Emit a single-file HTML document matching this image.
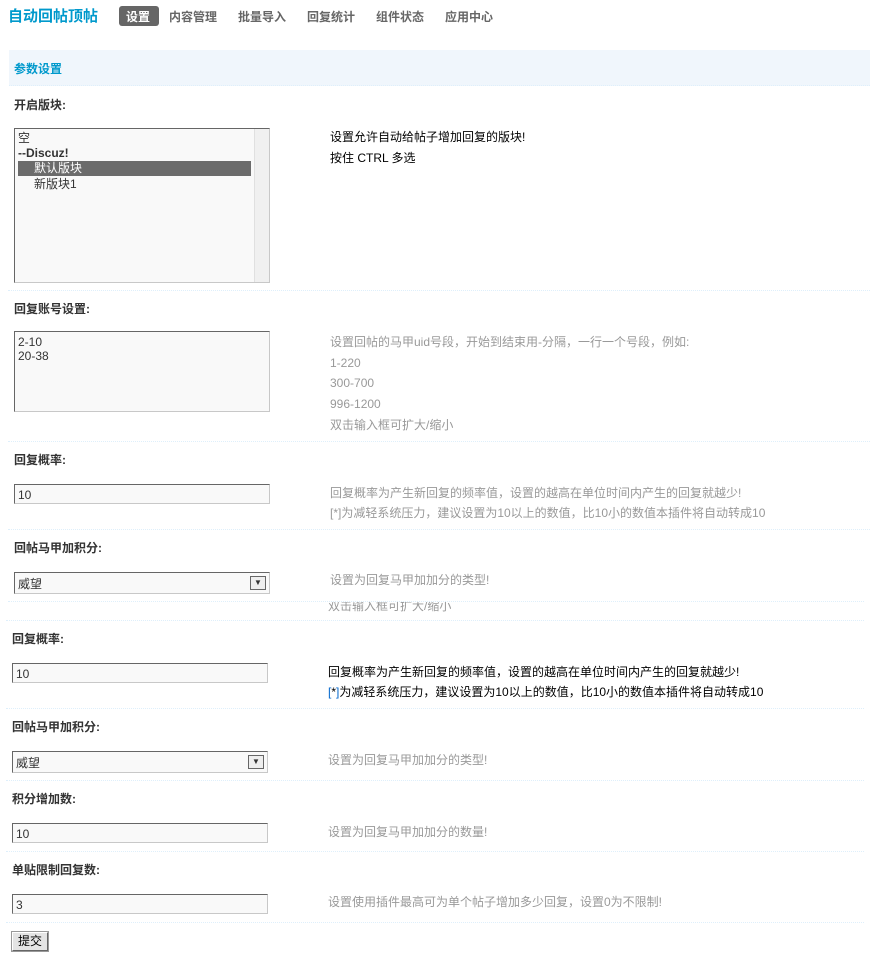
<!DOCTYPE html>
<html><head><meta charset="utf-8">
<style>
*{margin:0;padding:0;box-sizing:border-box}
body{width:870px;height:978px;background:#fff;font:12px "Liberation Sans","Noto Sans CJK SC",sans-serif;color:#333;position:relative;overflow:hidden}
.a{position:absolute;white-space:nowrap;line-height:14px}
.b{font-weight:bold}
.g{color:#999}
.sep{position:absolute;height:0;border-top:1px dotted #deeffb}
.box{position:absolute;background:#f9f9f9;border:1px solid #c8c8c8;border-top-color:#666;border-left-color:#666}
.box span{position:absolute;left:3px;top:3px;line-height:14px}
</style></head><body>
<div class="a b" style="left:8px;top:8px;font-size:15px;line-height:17px;color:#09c">自动回帖顶帖</div>
<div class="a b" style="left:119px;top:6px;width:40px;height:20px;background:#666;border-radius:3px"></div>
<div class="a b" style="left:126px;top:10px;color:#fff">设置</div>
<div class="a b" style="left:169px;top:10px;color:#666">内容管理</div>
<div class="a b" style="left:238px;top:10px;color:#666">批量导入</div>
<div class="a b" style="left:307px;top:10px;color:#666">回复统计</div>
<div class="a b" style="left:376px;top:10px;color:#666">组件状态</div>
<div class="a b" style="left:445px;top:10px;color:#666">应用中心</div>

<div class="a" style="left:9px;top:50px;width:861px;height:36px;background:#f0f6fc;border-bottom:1px dotted #deeffb"></div>
<div class="a b" style="left:14px;top:62px;color:#09c">参数设置</div>

<div class="a b" style="left:14px;top:98px">开启版块:</div>
<div class="box" style="left:14px;top:128px;width:256px;height:155px">
 <div style="position:absolute;right:0;top:0;width:15px;height:153px;background:#f0f0f0;border-left:1px solid #e0e0e0"></div>
 <div class="a" style="left:3px;top:2px">空</div>
 <div class="a b" style="left:3px;top:17px">--Discuz!</div>
 <div class="a" style="left:3px;top:32px;width:233px;height:15px;background:#6b6b6b;color:#fff;padding-left:16px">默认版块</div>
 <div class="a" style="left:19px;top:48px">新版块1</div>
</div>
<div class="a" style="left:330px;top:130px;color:#000">设置允许自动给帖子增加回复的版块!</div>
<div class="a" style="left:330px;top:151px;color:#000">按住 CTRL 多选</div>
<div class="sep" style="left:8px;top:290px;width:862px"></div>

<div class="a b" style="left:14px;top:302px">回复账号设置:</div>
<div class="box" style="left:14px;top:331px;width:256px;height:81px"><span style="left:3px;top:3px">2-10<br>20-38</span></div>
<div class="a g" style="left:330px;top:335px">设置回帖的马甲uid号段，开始到结束用-分隔，一行一个号段，例如:</div>
<div class="a g" style="left:330px;top:356px">1-220</div>
<div class="a g" style="left:330px;top:376px">300-700</div>
<div class="a g" style="left:330px;top:397px">996-1200</div>
<div class="a g" style="left:330px;top:418px">双击输入框可扩大/缩小</div>
<div class="sep" style="left:8px;top:441px;width:862px"></div>

<div class="a b" style="left:14px;top:453px">回复概率:</div>
<div class="box" style="left:14px;top:484px;width:256px;height:20px"><span>10</span></div>
<div class="a g" style="left:330px;top:486px">回复概率为产生新回复的频率值，设置的越高在单位时间内产生的回复就越少!</div>
<div class="a g" style="left:330px;top:506px">[*]为减轻系统压力，建议设置为10以上的数值，比10小的数值本插件将自动转成10</div>
<div class="sep" style="left:8px;top:529px;width:862px"></div>

<div class="a b" style="left:14px;top:541px">回帖马甲加积分:</div>
<div class="box" style="left:14px;top:572px;width:256px;height:22px"><span style="top:4px">威望</span>
 <div style="position:absolute;right:3px;top:3px;width:16px;height:14px;border:1px solid #666;background:#eee;font-size:8px;text-align:center;line-height:12px">▼</div></div>
<div class="a g" style="left:330px;top:573px">设置为回复马甲加加分的类型!</div>
<div class="sep" style="left:8px;top:601px;width:856px"></div>
<div class="a g" style="left:328px;top:602px;height:10px;overflow:hidden;line-height:14px"><div style="margin-top:-3px">双击输入框可扩大/缩小</div></div>
<div class="sep" style="left:6px;top:620px;width:858px"></div>

<div class="a b" style="left:12px;top:632px">回复概率:</div>
<div class="box" style="left:12px;top:663px;width:256px;height:20px"><span>10</span></div>
<div class="a" style="left:328px;top:665px;color:#000">回复概率为产生新回复的频率值，设置的越高在单位时间内产生的回复就越少!</div>
<div class="a" style="left:328px;top:685px;color:#000"><span style="color:#06c">[</span>*<span style="color:#06c">]</span>为减轻系统压力，建议设置为10以上的数值，比10小的数值本插件将自动转成10</div>
<div class="sep" style="left:6px;top:708px;width:858px"></div>

<div class="a b" style="left:12px;top:720px">回帖马甲加积分:</div>
<div class="box" style="left:12px;top:751px;width:256px;height:22px"><span style="top:4px">威望</span>
 <div style="position:absolute;right:3px;top:3px;width:16px;height:14px;border:1px solid #666;background:#eee;font-size:8px;text-align:center;line-height:12px">▼</div></div>
<div class="a g" style="left:328px;top:753px">设置为回复马甲加加分的类型!</div>
<div class="sep" style="left:6px;top:780px;width:858px"></div>

<div class="a b" style="left:12px;top:792px">积分增加数:</div>
<div class="box" style="left:12px;top:823px;width:256px;height:20px"><span>10</span></div>
<div class="a g" style="left:328px;top:825px">设置为回复马甲加加分的数量!</div>
<div class="sep" style="left:6px;top:851px;width:858px"></div>

<div class="a b" style="left:12px;top:863px">单贴限制回复数:</div>
<div class="box" style="left:12px;top:894px;width:256px;height:20px"><span>3</span></div>
<div class="a g" style="left:328px;top:895px">设置使用插件最高可为单个帖子增加多少回复，设置0为不限制!</div>
<div class="sep" style="left:6px;top:922px;width:858px"></div>

<div class="a" style="left:12px;top:932px;width:36px;height:19px;background:#e4e4e4;border:1px solid #666;border-top-color:#fff;border-left-color:#fff;outline:1px solid #999;text-align:center;line-height:17px;color:#000">提交</div>
</body></html>
